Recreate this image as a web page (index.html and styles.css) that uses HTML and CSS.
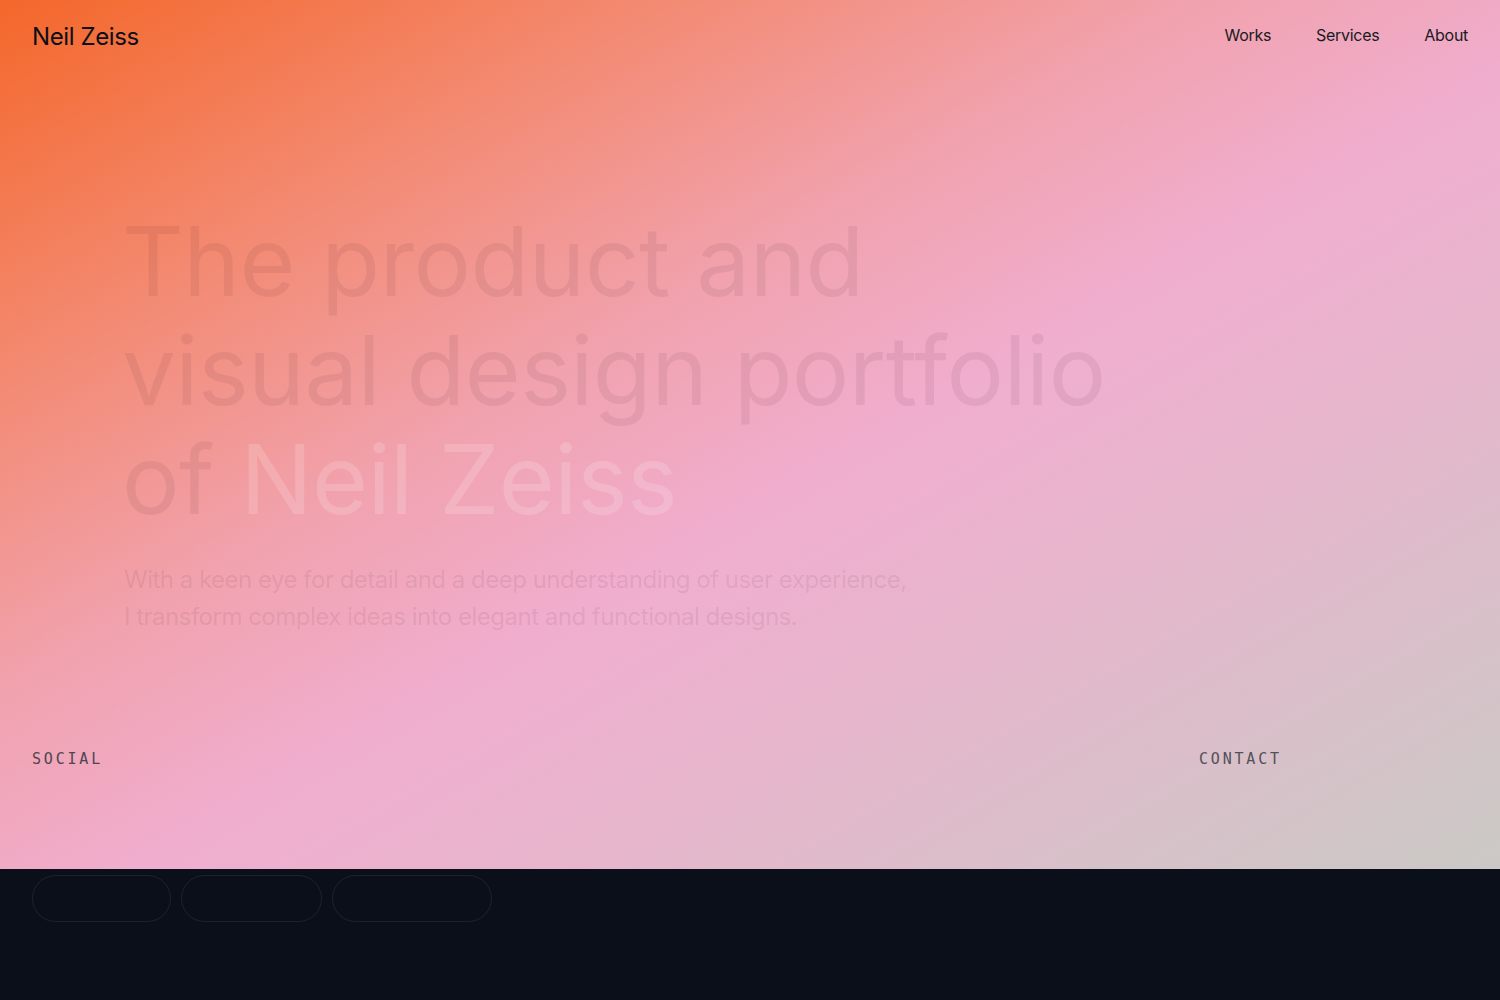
FILE: index.html
```html
<!DOCTYPE html>
<html lang="en">
<head>
<meta charset="utf-8">
<title>Neil Zeiss</title>
<link rel="stylesheet" href="styles.css">
</head>
<body>
<section class="hero">
  <header class="topbar">
    <a class="logo" href="#">Neil Zeiss</a>
    <nav class="nav">
      <a href="#">Works</a>
      <a href="#">Services</a>
      <a href="#">About</a>
    </nav>
  </header>
  <div class="intro">
    <h1 class="title">The product and<br>visual design portfolio<br>of <span class="name">Neil Zeiss</span></h1>
    <p class="lead">With a keen eye for detail and a deep understanding of user experience,<br>I transform complex ideas into elegant and functional designs.</p>
  </div>
  <div class="labels">
    <div class="label">SOCIAL</div>
    <div class="label contact">CONTACT</div>
  </div>
</section>
<section class="dark">
  <div class="pills">
    <a class="pill p1" href="#"></a>
    <a class="pill p2" href="#"></a>
    <a class="pill p3" href="#"></a>
  </div>
</section>
</body>
</html>
```

FILE: styles.css
```css
* { box-sizing: border-box; }
html, body { margin: 0; padding: 0; }
body {
  background: #0b0f19;
  font-family: Inter, "Noto Sans", sans-serif;
  color: #0b0f19;
}
a { color: inherit; text-decoration: none; }

.hero {
  height: 869px;
  background: linear-gradient(to bottom right, #f4672a 0%, #f38a72 22%, #f1a2ae 40%, #f0aecf 55%, #e6b6cc 70%, #d8c0c9 85%, #cac9c5 100%);
  display: flex;
  flex-direction: column;
  padding: 0 32px;
}

.topbar {
  display: flex;
  justify-content: space-between;
  align-items: center;
  height: 71px;
}
.logo {
  font-size: 24px;
  letter-spacing: -0.4px;
  color: #0b0f19;
  margin-top: 1px;
}
.nav {
  display: flex;
  gap: 45px;
  font-size: 16px;
  letter-spacing: -0.3px;
  color: #1a1a22;
  margin-bottom: 1px;
}

.intro {
  padding-left: 90px;
  margin-top: 136px;
}
.title {
  margin: 0;
  font-weight: 400;
  font-size: 96px;
  line-height: 109px;
  letter-spacing: -0.6px;
  color: rgba(60, 30, 40, 0.08);
}
.name { color: rgba(255, 255, 255, 0.16); }
.lead {
  margin: 27px 0 0 2px;
  font-size: 24px;
  line-height: 37px;
  letter-spacing: -0.5px;
  color: rgba(90, 40, 60, 0.1);
}

.labels {
  margin-top: auto;
  margin-bottom: 101px;
  display: grid;
  grid-template-columns: 1167px 1fr;
}
.label {
  font-family: "DejaVu Sans Mono", "Liberation Mono", monospace;
  font-size: 15px;
  letter-spacing: 2.8px;
  color: #4e4550;
}
.contact { color: #545058; }

.dark {
  padding: 6px 32px 0;
  height: 131px;
}
.pills {
  display: flex;
  gap: 10px;
}
.pill {
  height: 47px;
  border: 1px solid rgba(255, 255, 255, 0.08);
  border-radius: 24px;
}
.p1 { width: 139px; }
.p2 { width: 141px; }
.p3 { width: 160px; }
```
